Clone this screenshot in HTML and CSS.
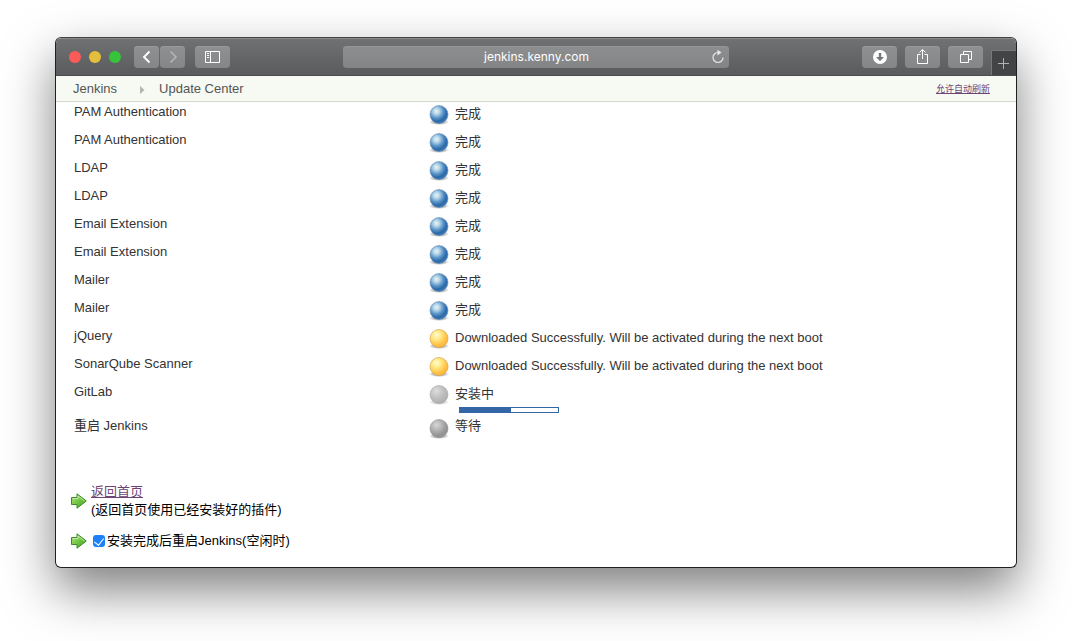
FILE: index.html
```html
<!DOCTYPE html>
<html lang="zh-CN">
<head>
<meta charset="utf-8">
<title>Update Center [Jenkins]</title>
<link rel="stylesheet" href="styles.css">
</head>
<body>
<svg class="sprites" aria-hidden="true">
  <defs>
    <radialGradient id="g-blue" cx=".36" cy=".32" r=".72">
      <stop offset="0" stop-color="#e8f4f8"/><stop offset=".25" stop-color="#b3d3e6"/><stop offset=".52" stop-color="#5c95c8"/><stop offset=".78" stop-color="#2b68ab"/><stop offset="1" stop-color="#3d7cb8"/>
    </radialGradient>
    <radialGradient id="g-yellow" cx=".36" cy=".3" r=".75">
      <stop offset="0" stop-color="#fffbd0"/><stop offset=".35" stop-color="#ffe985"/><stop offset=".75" stop-color="#ffc045"/><stop offset="1" stop-color="#fdb43c"/>
    </radialGradient>
    <radialGradient id="g-light" cx=".36" cy=".3" r=".75">
      <stop offset="0" stop-color="#dedede"/><stop offset=".45" stop-color="#c3c3c3"/><stop offset="1" stop-color="#adadad"/>
    </radialGradient>
    <radialGradient id="g-grey" cx=".36" cy=".3" r=".75">
      <stop offset="0" stop-color="#d8d8d8"/><stop offset=".4" stop-color="#b4b4b4"/><stop offset=".8" stop-color="#929292"/><stop offset="1" stop-color="#999"/>
    </radialGradient>
    <radialGradient id="g-shade">
      <stop offset="0" stop-color="#000" stop-opacity=".45"/><stop offset=".6" stop-color="#000" stop-opacity=".25"/><stop offset="1" stop-color="#000" stop-opacity="0"/>
    </radialGradient>
    <linearGradient id="g-arrow" x1="0" y1="0" x2="1" y2="1">
      <stop offset="0" stop-color="#b5e28b"/><stop offset=".5" stop-color="#72c544"/><stop offset="1" stop-color="#3da01c"/>
    </linearGradient>
  </defs>
  <symbol id="blue" viewBox="0 0 24 24"><ellipse cx="12" cy="20" rx="10" ry="3" fill="url(#g-shade)"/><circle cx="12" cy="12.500" r="9" fill="url(#g-blue)" stroke="#5f8bb5" stroke-width=".6"/></symbol>
  <symbol id="yellow" viewBox="0 0 24 24"><ellipse cx="12" cy="20" rx="10" ry="3" fill="url(#g-shade)"/><circle cx="12" cy="12.500" r="9" fill="url(#g-yellow)" stroke="#d9a548" stroke-width=".7"/></symbol>
  <symbol id="light" viewBox="0 0 24 24"><ellipse cx="12" cy="20" rx="10" ry="3" fill="url(#g-shade)" opacity=".6"/><circle cx="12" cy="12.500" r="9" fill="url(#g-light)" stroke="#a5a5a5" stroke-width=".6"/></symbol>
  <symbol id="grey" viewBox="0 0 24 24"><ellipse cx="12" cy="20" rx="10" ry="3" fill="url(#g-shade)"/><circle cx="12" cy="12.500" r="9" fill="url(#g-grey)" stroke="#8b8b8b" stroke-width=".6"/></symbol>
  <symbol id="arrow" viewBox="0 0 18 18"><path d="M1.500 5.500H7V1.800L16.300 9 7 16.200V12.500H1.500Z" fill="url(#g-arrow)" stroke="#3c8a2a" stroke-width="1" stroke-linejoin="round"/><path d="M2.600 6.600H8V4L14.500 9" fill="none" stroke="#d5f0bd" stroke-width=".8"/></symbol>
</svg>

<main class="window">
  <header class="toolbar">
    <div class="toolbar-left">
      <span class="light red"></span><span class="light amber"></span><span class="light green"></span>
      <div class="nav">
        <button class="tool small" aria-label="Back"><svg width="24" height="22" viewBox="0 0 24 22"><path d="M14.500 5.500 9 11l5.500 5.500" fill="none" stroke="#fff" stroke-width="1.900"/></svg></button>
        <button class="tool small" aria-label="Forward"><svg width="24" height="22" viewBox="0 0 24 22"><path d="M9.500 5.500 15 11l-5.500 5.500" fill="none" stroke="#b4b5b7" stroke-width="1.600"/></svg></button>
      </div>
      <button class="tool" aria-label="Sidebar"><svg width="35" height="22" viewBox="0 0 35 22"><path d="M10.500 5.500h14v11h-14zM15.500 5.500v11M12 7.500h2M12 9.500h2M12 11.500h2" fill="none" stroke="#fff"/></svg></button>
    </div>
    <div class="address">
      <input class="url" type="text" value="jenkins.kenny.com" aria-label="Address">
      <button class="reload" aria-label="Reload"><svg width="14" height="16" viewBox="0 0 14 16"><path d="M7 3.500a5 5 0 1 0 5 5" fill="none" stroke="#e8e8e8" stroke-width="1.200"/><path d="M6.500.8 10.500 3.600 6.500 6.400Z" fill="#e8e8e8"/></svg></button>
    </div>
    <div class="toolbar-right">
      <button class="tool" aria-label="Downloads"><svg width="35" height="22" viewBox="0 0 35 22"><circle cx="18" cy="11" r="7" fill="#fff"/><path d="M16.800 7h2.400v4h2.800l-4 4.300-4-4.300h2.800Z" fill="#77787a"/></svg></button>
      <button class="tool" aria-label="Share"><svg width="35" height="22" viewBox="0 0 35 22"><path d="M15.500 8.500h-3v9h10v-9h-3M17.500 13V4M14.500 6.500l3-3 3 3" fill="none" stroke="#fff"/></svg></button>
      <button class="tool" aria-label="Tabs"><svg width="35" height="22" viewBox="0 0 35 22"><path d="M12.500 8.500h8v8h-8zM15.500 8V5.500h8v8H21" fill="none" stroke="#fff"/></svg></button>
      <button class="new-tab" aria-label="New tab"><svg width="24" height="24" viewBox="0 0 24 24"><path d="M6 12.500h11M11.500 7v11" fill="none" stroke="#b1b2b3"/></svg></button>
    </div>
  </header>

  <nav class="crumbs">
    <a href="#">Jenkins</a>
    <svg class="chevron" width="5" height="8" viewBox="0 0 5 8"><path d="M0 0l4.500 4L0 8z" fill="#b3b5b1"/></svg>
    <a href="#">Update Center</a>
    <a class="refresh" href="#">允许自动刷新</a>
  </nav>

  <table class="jobs">
    <tbody>
      <tr><td>PAM Authentication</td><td><div class="status"><svg class="ball"><use href="#blue"/></svg><span>完成</span></div></td></tr>
      <tr><td>PAM Authentication</td><td><div class="status"><svg class="ball"><use href="#blue"/></svg><span>完成</span></div></td></tr>
      <tr><td>LDAP</td><td><div class="status"><svg class="ball"><use href="#blue"/></svg><span>完成</span></div></td></tr>
      <tr><td>LDAP</td><td><div class="status"><svg class="ball"><use href="#blue"/></svg><span>完成</span></div></td></tr>
      <tr><td>Email Extension</td><td><div class="status"><svg class="ball"><use href="#blue"/></svg><span>完成</span></div></td></tr>
      <tr><td>Email Extension</td><td><div class="status"><svg class="ball"><use href="#blue"/></svg><span>完成</span></div></td></tr>
      <tr><td>Mailer</td><td><div class="status"><svg class="ball"><use href="#blue"/></svg><span>完成</span></div></td></tr>
      <tr><td>Mailer</td><td><div class="status"><svg class="ball"><use href="#blue"/></svg><span>完成</span></div></td></tr>
      <tr><td>jQuery</td><td><div class="status"><svg class="ball"><use href="#yellow"/></svg><span>Downloaded Successfully. Will be activated during the next boot</span></div></td></tr>
      <tr><td>SonarQube Scanner</td><td><div class="status"><svg class="ball"><use href="#yellow"/></svg><span>Downloaded Successfully. Will be activated during the next boot</span></div></td></tr>
      <tr class="installing"><td>GitLab</td><td><div class="status"><svg class="ball"><use href="#light"/></svg><div><span>安装中</span><div class="progress"><div class="bar" style="width:52%"></div></div></div></div></td></tr>
      <tr class="pending"><td>重启 Jenkins</td><td><div class="status"><svg class="ball"><use href="#grey"/></svg><span>等待</span></div></td></tr>
    </tbody>
  </table>

  <section class="actions">
    <div class="action">
      <svg class="arrow"><use href="#arrow"/></svg>
      <div><a href="#">返回首页</a><br>(返回首页使用已经安装好的插件)</div>
    </div>
    <div class="action">
      <svg class="arrow"><use href="#arrow"/></svg>
      <div class="restart"><input type="checkbox" id="restart" checked><label for="restart">安装完成后重启Jenkins(空闲时)</label></div>
    </div>
  </section>
</main>
</body>
</html>
```

FILE: styles.css
```css
* { box-sizing: border-box; }

body {
  margin: 0;
  padding: 37px 55px 73px;
  background: #fff;
  color: #333;
  font: 13px/18px "Liberation Sans", "Noto Sans CJK SC", sans-serif;
}

button { margin: 0; padding: 0; border: 0; font: inherit; }
svg { display: block; flex: none; }
.sprites { position: absolute; width: 0; height: 0; }

.window {
  border: 1px solid #202123;
  border-top-color: #424345;
  border-radius: 6px;
  overflow: hidden;
  background: #fff;
  box-shadow: 0 22px 50px rgba(0, 0, 0, .5);
}

/* Browser toolbar */
.toolbar {
  display: grid;
  grid-template-columns: 1fr 386px 1fr;
  align-items: center;
  height: 38px;
  border-top: 1px solid #87888a;
  border-bottom: 1px solid #4b4c4e;
  background: linear-gradient(#707173, #5a5b5d);
}
.toolbar-left { display: flex; align-items: center; gap: 8px; padding-left: 13px; }
.light { width: 12px; height: 12px; border-radius: 50%; }
.red { background: #fc5b57; }
.amber { background: #e5bf3c; }
.green { background: #35c43b; }
.nav { display: flex; gap: 1px; margin: 0 2px 0 5px; }
.tool {
  display: flex;
  justify-content: center;
  width: 35px;
  height: 22px;
  border-radius: 4px;
  background: linear-gradient(#8f9092, #858688);
  box-shadow: inset 0 1px #98999b;
}
.tool.small { width: 25px; }
.address {
  display: flex;
  align-items: center;
  height: 22px;
  padding-right: 4px;
  border-radius: 4px;
  background: linear-gradient(#8d8e90, #838486);
  box-shadow: inset 0 1px #959698;
}
.url {
  flex: 1;
  min-width: 0;
  padding: 0 0 0 19px;
  border: 0;
  background: none;
  color: #fff;
  font: 12px/22px Inter, sans-serif;
  text-align: center;
  outline: 0;
}
.reload { background: none; }
.toolbar-right {
  display: flex;
  align-items: center;
  justify-content: flex-end;
  gap: 8px;
  height: 100%;
}
.new-tab {
  display: flex;
  align-self: flex-end;
  width: 25px;
  height: 25px;
  border-top: 1px solid #77787a;
  border-left: 1px solid #77787a;
  background: #434446;
}

/* Breadcrumb bar */
.crumbs {
  display: flex;
  align-items: center;
  height: 26px;
  padding: 0 26px 0 17px;
  border-bottom: 1px solid #d3d6cf;
  background: #f6faf2;
}
.crumbs a { color: #555; text-decoration: none; }
.chevron { margin: 2px 14px 0 23px; }
.crumbs .refresh {
  margin-left: auto;
  color: #6d4475;
  font-size: 9px;
  text-decoration: underline;
}

/* Plugin list */
.jobs { width: 100%; border-collapse: collapse; }
.jobs td { height: 28px; padding: 0; vertical-align: top; line-height: 20px; }
.jobs td:first-child { width: 371px; padding-left: 18px; }
.status { display: flex; gap: 4px; line-height: 24px; }
.pending .status { line-height: 20px; }
.installing td { height: 34px; }
.ball { width: 24px; height: 24px; }
.progress {
  width: 100px;
  height: 6px;
  margin: 1px 4px 0;
  border: 1px solid #3465a4;
  background: #fff;
}
.bar { height: 100%; background: #3465a4; }

/* Follow-up actions */
.actions {
  display: grid;
  gap: 13px;
  padding: 39px 14px 17px;
  color: #000;
}
.action { display: flex; align-items: center; gap: 3px; }
.action a { color: #6d4475; }
.arrow { width: 18px; height: 18px; }
.restart { display: flex; align-items: center; gap: 2px; padding-left: 2px; }
.restart input {
  display: grid;
  place-items: center;
  width: 12px;
  height: 12px;
  margin: 0;
  border-radius: 3px;
  background: #1b80fa;
  appearance: none;
}
.restart input:checked::before {
  content: "";
  width: 5px;
  height: 8px;
  margin-bottom: 2px;
  border: solid #fff;
  border-width: 0 1px 1px 0;
  transform: rotate(38deg);
}
```
